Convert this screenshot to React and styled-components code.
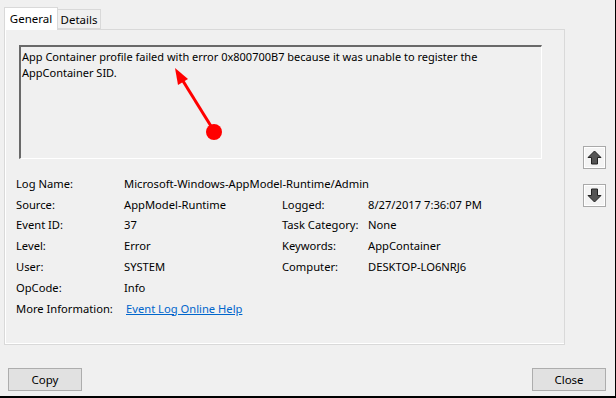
import React from "react";
import styled, { createGlobalStyle } from "styled-components";

const GlobalStyle = createGlobalStyle`
  html, body {
    margin: 0;
    padding: 0;
    background: #f0f0f0;
  }
  * {
    box-sizing: border-box;
  }
`;

const Window = styled.div`
  width: 616px;
  height: 398px;
  background: #f0f0f0;
  border-right: 1px solid #000;
  border-bottom: 2px solid #000;
  display: flex;
  flex-direction: column;
  font-family: "Noto Sans", "Open Sans", sans-serif;
  font-size: 11px;
  color: #000;
  overflow: hidden;
`;

const Top = styled.div`
  display: flex;
  padding: 7px 0 0 4px;
`;

const TabControl = styled.div`
  width: 561px;
  display: flex;
  flex-direction: column;
`;

const TabStrip = styled.div`
  display: flex;
  align-items: flex-end;
  height: 22px;
  position: relative;
  z-index: 1;
`;

const Tab = styled.div`
  width: ${(p) => p.$width}px;
  height: ${(p) => (p.$active ? "23px" : "20px")};
  padding-bottom: ${(p) => (p.$active ? "2px" : "0")};
  margin-bottom: ${(p) => (p.$active ? "-1px" : "0")};
  display: flex;
  align-items: center;
  justify-content: center;
  font-size: 11.5px;
  background: ${(p) => (p.$active ? "#ffffff" : "#f0f0f0")};
  border: 1px solid #d9d9d9;
  border-bottom: ${(p) => (p.$active ? "none" : "1px solid #d9d9d9")};
  border-left: ${(p) => (p.$first ? "1px solid #d9d9d9" : "none")};
  white-space: nowrap;
`;

const Panel = styled.div`
  height: 316px;
  border: 1px solid #d9d9d9;
  box-shadow: inset 1px 0 0 #ffffff, inset 0 -1px 0 #ffffff;
  padding: 15px 0 0 11px;
  display: flex;
  flex-direction: column;
`;

const MessageBox = styled.div`
  position: relative;
  width: 523px;
  height: 114px;
  margin-left: 3px;
  border-top: 2px solid #696969;
  border-left: 2px solid #696969;
  border-right: 1px solid #ffffff;
  border-bottom: 1px solid #ffffff;
  padding: 2px 0 0 1px;
  line-height: 16px;
`;

const Annotation = styled.svg`
  position: absolute;
  left: 0;
  top: 0;
  pointer-events: none;
`;

const Fields = styled.div`
  margin-top: 14px;
  display: grid;
  grid-template-columns: 108px 158px 86px auto;
  grid-auto-rows: 20.8px;
  align-items: center;
  font-size: 11.2px;
`;

const Label = styled.div`
  white-space: nowrap;
`;

const Value = styled.div`
  white-space: nowrap;
  grid-column: ${(p) => p.$span || "auto"};
`;

const Link = styled.a`
  color: #0066cc;
  text-decoration: underline;
  margin-left: 2px;
  cursor: pointer;
`;

const SideNav = styled.div`
  display: flex;
  flex-direction: column;
  gap: 15px;
  margin: 139px 0 0 18px;
`;

const NavButton = styled.div`
  width: 23px;
  height: 23px;
  border: 1px solid #a9a9a9;
  background: #f4f4f4;
  box-shadow: inset 0 0 0 1px #ffffff;
  display: flex;
  align-items: center;
  justify-content: center;
`;

const Footer = styled.div`
  display: flex;
  justify-content: space-between;
  padding: 0 9px 0 8px;
  margin-top: 23px;
`;

const Button = styled.div`
  width: 74px;
  height: 23px;
  border: 1px solid #adadad;
  background: #e1e1e1;
  display: flex;
  align-items: center;
  justify-content: center;
  font-size: 11.5px;
`;

const ArrowIcon = ({ down }) => (
  <svg width="15" height="15" viewBox="0 0 15 15">
    <polygon
      points="7.5,1 14,7.5 10.5,7.5 10.5,14 4.5,14 4.5,7.5 1,7.5"
      fill="#555"
      stroke="#222"
      strokeWidth="1"
      transform={down ? "rotate(180 7.5 7.5)" : undefined}
    />
  </svg>
);

const rows = [
  ["Log Name:", "Microsoft-Windows-AppModel-Runtime/Admin"],
  ["Source:", "AppModel-Runtime", "Logged:", "8/27/2017 7:36:07 PM"],
  ["Event ID:", "37", "Task Category:", "None"],
  ["Level:", "Error", "Keywords:", "AppContainer"],
  ["User:", "SYSTEM", "Computer:", "DESKTOP-LO6NRJ6"],
  ["OpCode:", "Info"],
];

export default function App() {
  return (
    <>
      <GlobalStyle />
      <Window>
        <Top>
          <TabControl>
            <TabStrip>
              <Tab $active $first $width={54}>General</Tab>
              <Tab $width={43}>Details</Tab>
            </TabStrip>
            <Panel>
              <MessageBox>
                App Container profile failed with error 0x800700B7 because it was unable to register the
                <br />
                AppContainer SID.
                <Annotation width="523" height="114">
                  <line x1="193" y1="84" x2="162" y2="34" stroke="#ff0000" strokeWidth="3" />
                  <polygon points="154,21 167,32 157,38" fill="#ff0000" />
                  <circle cx="193" cy="85" r="8" fill="#ff0000" />
                </Annotation>
              </MessageBox>
              <Fields>
                {rows.map((r) =>
                  r.length === 2 ? (
                    <React.Fragment key={r[0]}>
                      <Label>{r[0]}</Label>
                      <Value $span="2 / 5">{r[1]}</Value>
                    </React.Fragment>
                  ) : (
                    <React.Fragment key={r[0]}>
                      <Label>{r[0]}</Label>
                      <Value>{r[1]}</Value>
                      <Label>{r[2]}</Label>
                      <Value>{r[3]}</Value>
                    </React.Fragment>
                  )
                )}
                <Label>More Information:</Label>
                <Value $span="2 / 5">
                  <Link>Event Log Online Help</Link>
                </Value>
              </Fields>
            </Panel>
          </TabControl>
          <SideNav>
            <NavButton>
              <ArrowIcon />
            </NavButton>
            <NavButton>
              <ArrowIcon down />
            </NavButton>
          </SideNav>
        </Top>
        <Footer>
          <Button>Copy</Button>
          <Button>Close</Button>
        </Footer>
      </Window>
    </>
  );
}
